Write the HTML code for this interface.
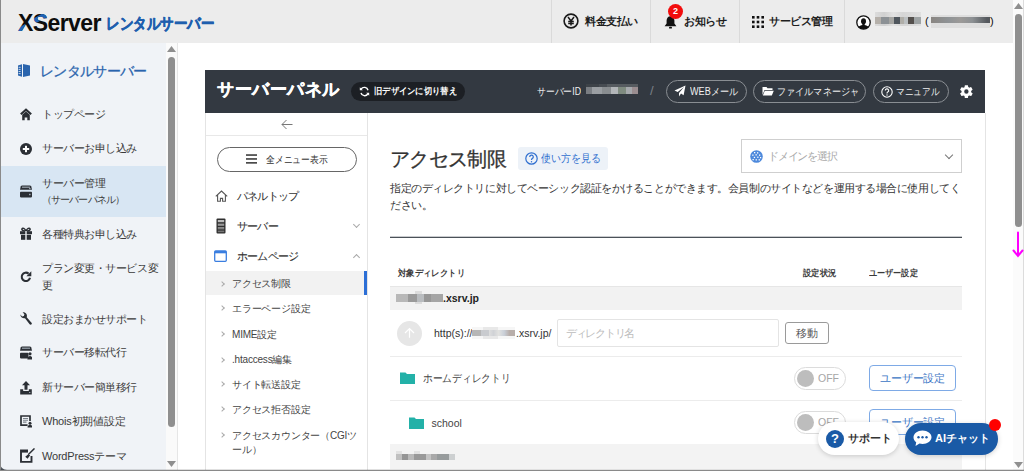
<!DOCTYPE html>
<html lang="ja">
<head>
<meta charset="utf-8">
<style>
*{box-sizing:border-box;margin:0;padding:0}
html,body{width:1024px;height:471px;overflow:hidden;background:#fff}
body{font-family:"Liberation Sans",sans-serif;color:#333;position:relative}
.a{position:absolute;white-space:nowrap}
.t{line-height:20px;height:20px}
#hdr{position:absolute;left:0;top:0;width:1013px;height:43px;background:#ececec}
.vd{position:absolute;top:0;width:1px;height:43px;background:#dadada}
.hi{font-size:11px;font-weight:bold;color:#1e1e1e;letter-spacing:-0.4px}
#side{position:absolute;left:0;top:43px;width:166px;height:427px;background:#f0f3f7;border-bottom-left-radius:7px}
.si{font-size:11px;color:#3a3a3a;letter-spacing:-0.45px}
.sbar{position:absolute;background:#8f8f8f;border-radius:4px}
#ph{position:absolute;left:205px;top:70px;width:780px;height:43px;background:#333941}
.pill{position:absolute;border:1px solid #8a8e93;border-radius:12px;height:23px;top:80px}
.pt{font-size:10px;color:#f0f0f0;letter-spacing:0;transform:scaleX(0.91);transform-origin:0 0}
.nv{font-size:11px;color:#333;letter-spacing:-0.8px;-webkit-text-stroke:0.1px #333}
.sub{font-size:10px;color:#444;letter-spacing:-0.2px}
.chev{position:absolute;width:5px;height:5px;border-right:1px solid #aaa;border-top:1px solid #aaa;transform:rotate(45deg)}
.ic{position:absolute}
</style>
</head>
<body>
<!-- window left border -->
<div class="a" style="left:0;top:0;width:1px;height:471px;background:#8a8a8a;z-index:5"></div>

<!-- HEADER -->
<div id="hdr">
  <div class="a" style="left:18px;top:11px;font-size:23px;font-weight:bold;color:#0d0d0d;letter-spacing:-0.6px;line-height:24px">XServer</div>
  <div class="a" style="left:18px;top:11px;font-size:23px;font-weight:bold;color:#1f63b6;letter-spacing:-0.6px;line-height:24px;clip-path:polygon(-3px 19px,7px 13px,9px 17px,-1px 24px);">X</div>
  <div class="a" style="left:18px;top:11px;font-size:23px;font-weight:bold;color:#1f63b6;letter-spacing:-0.6px;line-height:24px;clip-path:polygon(14.5px 8px,28px 0.5px,30px 5.5px,16.5px 13px);">XServer</div>
  <div class="a" style="left:106px;top:12px;font-size:16px;font-weight:bold;color:#1f5fae;line-height:24px;letter-spacing:0;-webkit-text-stroke:0.55px #1f5fae;transform:scaleX(0.845);transform-origin:0 0">レンタルサーバー</div>

  <div class="vd" style="left:551px"></div>
  <div class="vd" style="left:650px"></div>
  <div class="vd" style="left:739px"></div>
  <div class="vd" style="left:844px"></div>
  <!-- yen -->
  <svg class="ic" style="left:563px;top:13px" width="16" height="16" viewBox="0 0 16 16"><circle cx="8" cy="8" r="6.9" fill="none" stroke="#1a1a1a" stroke-width="1.6"/><path d="M5 4l3 4 3-4M8 8v4.5M5.2 8.6h5.6M5.2 10.4h5.6" stroke="#1a1a1a" stroke-width="1.5" fill="none"/></svg>
  <div class="a hi t" style="left:585px;top:11px">料金支払い</div>
  <!-- bell -->
  <svg class="ic" style="left:664px;top:15px" width="13" height="14" viewBox="0 0 13 14"><path d="M6.5 1.2c-2.4 0-3.9 1.9-3.9 4.4v3L0.6 11.2h11.8L10.4 8.6v-3c0-2.5-1.5-4.4-3.9-4.4z" fill="#111"/><rect x="5" y="11.8" width="3" height="1.8" rx="0.9" fill="#111"/></svg>
  <div class="a" style="left:668px;top:4px;width:15px;height:15px;border-radius:50%;background:#f20d0d;color:#fff;font-size:9px;font-weight:bold;text-align:center;line-height:15px">2</div>
  <div class="a hi t" style="left:684px;top:11px">お知らせ</div>
  <!-- grid -->
  <svg class="ic" style="left:752px;top:16px" width="12" height="12" viewBox="0 0 12 12" fill="#111"><rect x="0" y="0" width="2.6" height="2.6"/><rect x="4.7" y="0" width="2.6" height="2.6"/><rect x="9.4" y="0" width="2.6" height="2.6"/><rect x="0" y="4.7" width="2.6" height="2.6"/><rect x="4.7" y="4.7" width="2.6" height="2.6"/><rect x="9.4" y="4.7" width="2.6" height="2.6"/><rect x="0" y="9.4" width="2.6" height="2.6"/><rect x="4.7" y="9.4" width="2.6" height="2.6"/><rect x="9.4" y="9.4" width="2.6" height="2.6"/></svg>
  <div class="a hi t" style="left:769px;top:11px">サービス管理</div>
  <!-- user -->
  <svg class="ic" style="left:856px;top:14.5px" width="15" height="15" viewBox="0 0 15 15"><defs><clipPath id="uc"><circle cx="7.5" cy="7.5" r="6.6"/></clipPath></defs><circle cx="7.5" cy="7.5" r="6.6" fill="#fff"/><g clip-path="url(#uc)" fill="#111"><ellipse cx="7.5" cy="6.2" rx="2.5" ry="2.9"/><rect x="6.3" y="8" width="2.4" height="3"/><ellipse cx="7.5" cy="14.3" rx="6" ry="4.2"/></g><circle cx="7.5" cy="7.5" r="6.7" fill="none" stroke="#111" stroke-width="1.3"/></svg>
  <div class="a" style="left:875px;top:12px;width:46px;height:14px;background:linear-gradient(90deg,#dcdcdc,#d0d0d0 20%,#e2e2e2 40%,#d6d6d6 60%,#dadada 80%,#e0e0e0)"></div>
  <div class="a" style="left:875px;top:17px;width:46px;height:7px;background:linear-gradient(90deg,#b5b0aa 0,#b5b0aa 12%,#8c9195 12%,#8c9195 30%,#a5a5a2 30%,#a5a5a2 42%,#4f565d 42%,#4f565d 55%,#b0aea8 55%,#b0aea8 62%,#bcc0c2 62%,#bcc0c2 72%,#54504d 72%,#54504d 84%,#9ea3a4 84%)"></div>
  <div class="a" style="left:925px;top:11px;font-size:11px;color:#111;line-height:20px">(</div>
  <div class="a" style="left:931px;top:15px;width:59px;height:13px;background:#dedede"></div>
  <div class="a" style="left:931px;top:17px;width:59px;height:6px;background:linear-gradient(90deg,#8a8682,#8f9396 30%,#9c9a98 50%,#8d9194 70%,#55595e 95%)"></div>
  <div class="a" style="left:990px;top:11px;font-size:11px;color:#111;line-height:20px">)</div>
</div>

<!-- PAGE SCROLLBAR -->
<div class="a" style="left:1013px;top:0;width:11px;height:471px;background:#fbfbfb"></div>
<svg class="ic" style="left:1014px;top:462px" width="9" height="6" viewBox="0 0 9 6"><path d="M0 0H9L4.5 6z" fill="#8f8f8f"/></svg>
<div class="a" style="left:1023px;top:0;width:1px;height:471px;background:#dcdcdc"></div>
<svg class="ic" style="left:1014px;top:3px" width="9" height="6" viewBox="0 0 9 6"><path d="M4.5 0L9 6H0z" fill="#8f8f8f"/></svg>
<div class="sbar" style="left:1015px;top:14px;width:7px;height:213px"></div>

<!-- SIDEBAR -->
<div class="a" style="left:0;top:462px;width:8px;height:9px;background:#50565e"></div>
<div id="side">
  <div class="a" style="left:0;top:123px;width:166px;height:51px;background:#d8e6f3"></div>
</div>
<div class="a" style="left:166px;top:43px;width:11px;height:428px;background:#fafafa"></div>
<div class="a" style="left:177px;top:43px;width:1px;height:428px;background:#e6e6e6"></div>
<svg class="ic" style="left:167px;top:46px" width="9" height="6" viewBox="0 0 9 6"><path d="M4.5 0L9 6H0z" fill="#8f8f8f"/></svg>
<svg class="ic" style="left:167px;top:461px" width="9" height="6" viewBox="0 0 9 6"><path d="M0 0H9L4.5 6z" fill="#8f8f8f"/></svg>
<div class="sbar" style="left:168px;top:57px;width:7px;height:370px"></div>

<!-- sidebar content -->
<svg class="ic" style="left:17px;top:63px" width="14" height="15" viewBox="0 0 14 15"><path d="M1 2.6L5 1.2V13.8L1 12.4z" fill="#2a64ad"/><path d="M6 1L13 2.5V12.5L6 14z" fill="#2a64ad"/><path d="M1.6 4.3h2M1.6 6.4h2M1.6 8.5h2M1.6 10.6h2" stroke="#f0f3f7" stroke-width="0.8"/></svg>
<div class="a" style="left:40px;top:60px;font-size:14px;color:#2a64ad;line-height:22px;letter-spacing:-0.65px;-webkit-text-stroke:0.25px #2a64ad">レンタルサーバー</div>

<div class="a si t" style="left:42px;top:103.5px">トップページ</div>
<div class="a si t" style="left:42px;top:137.5px">サーバーお申し込み</div>
<div class="a si t" style="left:42px;top:172.5px">サーバー管理</div>
<div class="a si t" style="left:42px;top:190px;font-size:9.5px;letter-spacing:-0.9px">（サーバーパネル）</div>
<div class="a si t" style="left:42px;top:223.5px">各種特典お申し込み</div>
<div class="a si t" style="left:42px;top:257.5px">プラン変更・サービス変</div>
<div class="a si t" style="left:42px;top:274.5px">更</div>
<div class="a si t" style="left:42px;top:308.5px">設定おまかせサポート</div>
<div class="a si t" style="left:42px;top:341.5px">サーバー移転代行</div>
<div class="a si t" style="left:42px;top:376.5px">新サーバー簡単移行</div>
<div class="a si t" style="left:42px;top:410.5px;letter-spacing:-0.2px">Whois初期値設定</div>
<div class="a si t" style="left:42px;top:445.5px;letter-spacing:-0.2px">WordPressテーマ</div>

<!-- sidebar icons -->
<svg class="ic" style="left:20px;top:108px" width="12" height="13" viewBox="0 0 12 13"><path d="M0.8 6.2L6 1.6l5.2 4.6" stroke="#2b2f35" stroke-width="2.1" fill="none"/><path d="M2.2 6.8L6 3.6l3.8 3.2V12.3H7.3V9.6H4.7V12.3H2.2z" fill="#2b2f35"/></svg>
<svg class="ic" style="left:20px;top:143px" width="12" height="12" viewBox="0 0 12 12"><circle cx="6" cy="6" r="6" fill="#2b2f35"/><rect x="5" y="2.8" width="2" height="6.4" fill="#fff"/><rect x="2.8" y="5" width="6.4" height="2" fill="#fff"/></svg>
<svg class="ic" style="left:20px;top:185px" width="12" height="13" viewBox="0 0 12 13"><path d="M2.3 0.5h7.4c0.8 0 1.3 0.4 1.6 1.1L12 4.8H0L0.7 1.6C1 0.9 1.5 0.5 2.3 0.5z" fill="#2b2f35"/><rect x="0" y="5.6" width="12" height="0.7" fill="#2b2f35" opacity="0"/><rect x="2" y="1.6" width="8" height="1.2" fill="#9aa3ad"/><rect x="0" y="6.8" width="12" height="5.6" rx="0.8" fill="#2b2f35"/><rect x="9" y="8.8" width="1.6" height="1.4" fill="#9aa3ad"/><rect x="9" y="3" width="1.6" height="1.2" fill="#9aa3ad"/></svg>
<svg class="ic" style="left:20px;top:227px" width="12" height="13" viewBox="0 0 12 13"><path d="M6 4.2C4.8 1.2 2.6 0.6 2 1.8c-0.6 1.2 1 2.2 4 2.4zM6 4.2c1.2-3 3.4-3.6 4-2.4 0.6 1.2-1 2.2-4 2.4z" stroke="#2b2f35" stroke-width="1.5" fill="none"/><rect x="0" y="4.2" width="12" height="3" fill="#2b2f35"/><rect x="1" y="7.8" width="10" height="5" fill="#2b2f35"/><rect x="5.3" y="4" width="1.4" height="9" fill="#f0f3f7"/></svg>
<svg class="ic" style="left:20px;top:271px" width="12" height="12" viewBox="0 0 12 12"><path d="M10 6.8A4.2 4.2 0 1 1 8.6 2.6" stroke="#2b2f35" stroke-width="2.1" fill="none"/><path d="M11.3 0.3V5.2H6.4z" fill="#2b2f35"/></svg>
<svg class="ic" style="left:20px;top:312px" width="12" height="13" viewBox="0 0 12 13"><path d="M0.5 2.6a3.6 3.6 0 0 0 4.7 3.5M6.4 4.9A3.6 3.6 0 0 0 2.8 0.4" stroke="none" fill="none"/><path d="M0.4 2.5A3.7 3.7 0 0 0 5 6.2L9.6 12.2c0.6 0.8 2 0.6 2.2-0.4 0.1-0.4 0-0.8-0.3-1.1L6.7 5.2A3.7 3.7 0 0 0 2.6 0.3L4.4 2.3 3.9 4.1 2.1 4.5z" fill="#2b2f35"/></svg>
<svg class="ic" style="left:20px;top:346px" width="12" height="14" viewBox="0 0 12 14"><path d="M2.3 0.5h7.4c0.8 0 1.3 0.4 1.6 1.1L12 4.8H0L0.7 1.6C1 0.9 1.5 0.5 2.3 0.5z" fill="#2b2f35"/><rect x="2" y="1.6" width="8" height="1.2" fill="#9aa3ad"/><rect x="0" y="6.8" width="8.5" height="5.6" rx="0.8" fill="#2b2f35"/><circle cx="10" cy="7.8" r="1.6" fill="#2b2f35"/><path d="M7.4 13.5c0-2.2 1.2-3.4 2.6-3.4s2.6 1.2 2.6 3.4z" fill="#2b2f35"/></svg>
<svg class="ic" style="left:20px;top:381px" width="12" height="14" viewBox="0 0 12 14"><path d="M6 0L10 4.2H7.5v4.5h-3V4.2H2z" fill="#2b2f35"/><path d="M0.2 8.2h3v1.8h5.6V8.2h3V13.4H0.2z" fill="#2b2f35"/><rect x="9" y="11" width="1.4" height="1" fill="#9aa3ad"/></svg>
<svg class="ic" style="left:20px;top:415px" width="12" height="13" viewBox="0 0 12 13"><path d="M7.6 10.2H1V1h9v5" fill="none" stroke="#2b2f35" stroke-width="1.7"/><path d="M3 3.5h5M3 5.3h5M3 7.1h3.5" stroke="#7b828a" stroke-width="1.1"/><circle cx="10" cy="8.3" r="1.5" fill="#2b2f35"/><path d="M7.5 12.6c0-2 1.1-2.8 2.5-2.8s2.5 0.8 2.5 2.8z" fill="#2b2f35"/></svg>
<svg class="ic" style="left:20px;top:448px" width="15" height="15" viewBox="0 0 15 15"><path d="M8 2.4H1v11.5h10.5V8" fill="none" stroke="#2b2f35" stroke-width="1.9"/><rect x="1" y="2.4" width="7" height="2.2" fill="#2b2f35"/><path d="M14.5 0.4L8.4 6.5M9.2 7.4l-1.7 2.4 -1.2-1.1 2.3-1.8z" stroke="#2b2f35" stroke-width="1.4" fill="#2b2f35"/></svg>

<!-- PANEL -->
<div class="a" style="left:205px;top:113px;width:1px;height:358px;background:#e4e4e4"></div>
<div class="a" style="left:985px;top:113px;width:1px;height:358px;background:#e4e4e4"></div>
<div class="a" style="left:367px;top:113px;width:1px;height:358px;background:#e4e4e4"></div>
<div id="ph"></div>
<div class="a" style="left:217px;top:79px;font-size:17px;font-weight:bold;color:#fff;line-height:22px;letter-spacing:0.5px;-webkit-text-stroke:0.4px #fff">サーバーパネル</div>
<div class="a" style="left:351px;top:82px;width:114px;height:19px;border-radius:10px;background:#1c1f24"></div>
<svg class="ic" style="left:359px;top:86px" width="11" height="11" viewBox="0 0 11 11"><path d="M9 4.2A3.8 3.8 0 0 0 2.2 3" stroke="#fff" stroke-width="1.4" fill="none"/><path d="M2 7a3.8 3.8 0 0 0 6.8 1" stroke="#fff" stroke-width="1.4" fill="none"/><path d="M0.8 1.2v3h3z" fill="#fff"/><path d="M10.2 9.8v-3h-3z" fill="#fff"/></svg>
<div class="a" style="left:374px;top:82px;font-size:9px;font-weight:bold;color:#fff;line-height:19px;letter-spacing:0;transform:scaleX(0.92);transform-origin:0 0">旧デザインに切り替え</div>

<div class="a pt" style="left:537px;top:82px;line-height:19px;font-size:10px;transform:scaleX(0.88)">サーバーID</div>
<div class="a" style="left:586px;top:84px;width:52px;height:10px;background:linear-gradient(90deg,#3d4248 0,#3d4248 25%,#474c52 25%,#474c52 40%,#565b60 40%,#565b60 100%)"></div>
<div class="a" style="left:586px;top:87px;width:52px;height:7px;background:linear-gradient(90deg,#7a7e83 0,#7a7e83 12%,#9a9ea2 12%,#9a9ea2 30%,#898d90 30%,#898d90 48%,#b3b6b9 48%,#b3b6b9 62%,#7f8b80 62%,#7f8b80 76%,#a6a9ad 76%,#a6a9ad 88%,#9a8d90 88%)"></div>
<div class="a" style="left:650px;top:81px;font-size:13px;color:#7c8086;line-height:20px">/</div>

<div class="pill" style="left:666px;width:81px"></div>
<svg class="ic" style="left:674px;top:85px" width="12" height="12" viewBox="0 0 12 12"><path d="M11.5 0.5L0.5 5.6l3.2 1.3L10 2 5 8v3.5L7 8.6l2.6 1.6z" fill="#fff"/></svg>
<div class="a pt" style="left:690px;top:81px;line-height:21px">WEBメール</div>

<div class="pill" style="left:753px;width:113px"></div>
<svg class="ic" style="left:762px;top:86px" width="12" height="10" viewBox="0 0 12 10"><path d="M0.5 1h4l1 1.2h5v1.8H2.5L0.5 9z" fill="#fff"/><path d="M2.8 4.8h9l-2 4.7H0.8z" fill="#fff"/></svg>
<div class="a pt" style="left:777px;top:81px;line-height:21px">ファイルマネージャ</div>

<div class="pill" style="left:873px;width:76px"></div>
<svg class="ic" style="left:881px;top:86px" width="12" height="12" viewBox="0 0 12 12"><circle cx="6" cy="6" r="5.2" fill="none" stroke="#fff" stroke-width="1.1"/><path d="M4.3 4.6a1.7 1.7 0 1 1 2.4 1.5c-0.6 0.3-0.7 0.6-0.7 1.3" stroke="#fff" stroke-width="1.1" fill="none"/><circle cx="6" cy="9" r="0.7" fill="#fff"/></svg>
<div class="a pt" style="left:896px;top:81px;line-height:21px;transform:scaleX(0.865)">マニュアル</div>

<svg class="ic" style="left:959px;top:84px" width="15" height="15" viewBox="0 0 24 24"><path fill="#fff" d="M19.4 13c.04-.32.06-.66.06-1s-.02-.68-.07-1l2.16-1.68a.5.5 0 0 0 .12-.64l-2.05-3.55a.5.5 0 0 0-.61-.22l-2.55 1.03a7.5 7.5 0 0 0-1.73-1L14.35 2.2A.5.5 0 0 0 13.85 2h-4.1a.5.5 0 0 0-.5.42l-.38 2.72c-.62.26-1.2.6-1.730 1L4.6 5.1a.5.5 0 0 0-.6.22L1.930 8.87a.5.5 0 0 0 .12.64L4.2 11.2c-.05.32-.08.66-.08 1s.03.68.08 1l-2.16 1.68a.5.5 0 0 0-.12.64l2.05 3.55c.13.22.38.3.61.22l2.55-1.03c.53.4 1.1.74 1.73 1l.38 2.72c.05.24.26.42.5.42h4.1c.25 0 .46-.18.5-.42l.38-2.72c.62-.26 1.2-.6 1.73-1l2.55 1.03c.23.08.48 0 .61-.22l2.05-3.55a.5.5 0 0 0-.12-.64zM11.8 15.5a3.5 3.5 0 1 1 0-7 3.5 3.5 0 0 1 0 7z"/></svg>

<!-- panel left nav -->
<svg class="ic" style="left:281px;top:119px" width="12" height="11" viewBox="0 0 12 11"><path d="M11.5 5.5H1M5.5 1L1 5.5 5.5 10" stroke="#777" stroke-width="1" fill="none"/></svg>
<div class="a" style="left:206px;top:135px;width:161px;height:1px;background:#e8e8e8"></div>
<div class="a" style="left:217px;top:147px;width:140px;height:25px;border:1px solid #666;border-radius:13px"></div>
<svg class="ic" style="left:246px;top:154px" width="11" height="10" viewBox="0 0 11 10"><rect y="0.2" width="11" height="1.7" fill="#4a4a4a"/><rect y="4.1" width="11" height="1.7" fill="#4a4a4a"/><rect y="8" width="11" height="1.7" fill="#4a4a4a"/></svg>
<div class="a" style="left:266px;top:149px;font-size:10px;color:#333;line-height:21px;letter-spacing:0;transform:scaleX(0.88);transform-origin:0 0">全メニュー表示</div>

<svg class="ic" style="left:215px;top:190px" width="13" height="12" viewBox="0 0 13 12"><path d="M0.8 6.4L6.5 1l5.7 5.4M2.6 5v6.3h2.8V8.4h2.2v2.9h2.8V5" stroke="#555" stroke-width="1.1" fill="none"/></svg>
<div class="a nv t" style="left:237px;top:186px">パネルトップ</div>
<svg class="ic" style="left:216px;top:218px" width="10" height="16" viewBox="0 0 10 16"><defs><linearGradient id="sg" x1="0" y1="0" x2="0" y2="1"><stop offset="0" stop-color="#aaa"/><stop offset="1" stop-color="#555"/></linearGradient></defs><rect x="0.5" y="0.5" width="9" height="15" rx="1" fill="#2f2f2f"/><rect x="1.8" y="2" width="6.4" height="2.2" fill="#bdbdbd"/><rect x="1.8" y="5.6" width="6.4" height="2.2" fill="#9a9a9a"/><rect x="1.8" y="9.2" width="6.4" height="2.5" fill="url(#sg)"/><rect x="1.8" y="12.6" width="6.4" height="1.6" fill="#777"/></svg>
<div class="a nv t" style="left:237px;top:216px">サーバー</div>
<div class="chev" style="left:354px;top:222px;transform:rotate(135deg);border-color:#aaa"></div>
<svg class="ic" style="left:214px;top:250px" width="13" height="12" viewBox="0 0 13 12"><rect x="0.7" y="0.9" width="11.6" height="10.4" rx="1" fill="none" stroke="#3a7ee0" stroke-width="1.3"/><rect x="0.7" y="1" width="11.6" height="2.3" fill="#3a7ee0"/></svg>
<div class="a nv t" style="left:237px;top:246px">ホームページ</div>
<div class="chev" style="left:354px;top:255px;transform:rotate(-45deg);border-color:#aaa"></div>

<div class="a" style="left:206px;top:271px;width:161px;height:24px;background:#f2f2f2"></div>
<div class="a" style="left:364px;top:271px;width:3px;height:24px;background:#2c6fd6"></div>
<div class="chev" style="left:220px;top:282px;width:4px;height:4px"></div>
<div class="a sub t" style="left:232px;top:274px">アクセス制限</div>
<div class="chev" style="left:220px;top:306px;width:4px;height:4px"></div>
<div class="a sub t" style="left:232px;top:298.5px">エラーページ設定</div>
<div class="chev" style="left:220px;top:332px;width:4px;height:4px"></div>
<div class="a sub t" style="left:232px;top:324.5px">MIME設定</div>
<div class="chev" style="left:220px;top:358px;width:4px;height:4px"></div>
<div class="a sub t" style="left:232px;top:350px">.htaccess編集</div>
<div class="chev" style="left:220px;top:382px;width:4px;height:4px"></div>
<div class="a sub t" style="left:232px;top:374.5px">サイト転送設定</div>
<div class="chev" style="left:220px;top:407px;width:4px;height:4px"></div>
<div class="a sub t" style="left:232px;top:399.5px">アクセス拒否設定</div>
<div class="chev" style="left:220px;top:433px;width:4px;height:4px"></div>
<div class="a sub t" style="left:232px;top:425.5px">アクセスカウンター（CGIツ</div>
<div class="a sub t" style="left:232px;top:439.5px">ール）</div>

<!-- CONTENT -->
<div class="a" style="left:390px;top:146px;font-size:20px;color:#333;line-height:26px;letter-spacing:-0.64px;-webkit-text-stroke:0.3px #333">アクセス制限</div>
<div class="a" style="left:518px;top:147px;width:90px;height:23px;border-radius:3px;background:#edf2f8"></div>
<svg class="ic" style="left:525px;top:152px" width="13" height="13" viewBox="0 0 13 13"><circle cx="6.5" cy="6.5" r="5.7" fill="none" stroke="#2f6fcf" stroke-width="1.2"/><path d="M4.7 5a1.8 1.8 0 1 1 2.5 1.6c-0.6 0.3-0.7 0.6-0.7 1.4" stroke="#2f6fcf" stroke-width="1.2" fill="none"/><circle cx="6.5" cy="9.8" r="0.75" fill="#2f6fcf"/></svg>
<div class="a" style="left:541px;top:148px;font-size:10.5px;color:#2f6fcf;line-height:21px;letter-spacing:0;transform:scaleX(0.9);transform-origin:0 0">使い方を見る</div>

<div class="a" style="left:741px;top:139px;width:221px;height:34px;border:1px solid #cfcfcf"></div>
<svg class="ic" style="left:750px;top:150px" width="13" height="13" viewBox="0 0 13 13"><circle cx="6.5" cy="6.5" r="6.3" fill="#4d89dc"/><g fill="#fff"><rect x="4" y="2" width="1.3" height="1.3"/><rect x="7" y="2.2" width="1.3" height="1.3"/><rect x="2.2" y="4.5" width="1.3" height="1.3"/><rect x="5.5" y="4.2" width="1.3" height="1.3"/><rect x="9" y="4.5" width="1.3" height="1.3"/><rect x="3.8" y="6.8" width="1.3" height="1.3"/><rect x="7.2" y="6.6" width="1.3" height="1.3"/><rect x="10" y="7" width="1.2" height="1.3"/><rect x="2.5" y="9" width="1.3" height="1.3"/><rect x="5.6" y="9.2" width="1.3" height="1.3"/><rect x="8.6" y="9.2" width="1.3" height="1.3"/></g></svg>
<div class="a" style="left:768px;top:146px;font-size:11px;color:#aaa;line-height:20px;letter-spacing:-1.2px">ドメインを選択</div>
<div class="chev" style="left:946px;top:152px;width:6px;height:6px;border-color:#777;transform:rotate(135deg)"></div>

<div class="a" style="left:390px;top:180px;font-size:11px;color:#333;line-height:17px;letter-spacing:-0.44px">指定のディレクトリに対してベーシック認証をかけることができます。会員制のサイトなどを運用する場合に使用してく</div>
<div class="a" style="left:390px;top:197px;font-size:11px;color:#333;line-height:17px;letter-spacing:-0.44px">ださい。</div>

<div class="a" style="left:390px;top:236px;width:572px;height:1px;background:#c9cbce"></div><div class="a" style="left:390px;top:237px;width:572px;height:1px;background:#4b5158"></div>

<div class="a" style="left:397.5px;top:264px;font-size:8.5px;font-weight:bold;color:#3a3a3a;line-height:18px;letter-spacing:0;transform:scaleX(0.93);transform-origin:0 0">対象ディレクトリ</div>
<div class="a" style="left:803px;top:264px;font-size:8.5px;font-weight:bold;color:#3a3a3a;line-height:18px;letter-spacing:0;transform:scaleX(0.92);transform-origin:0 0">設定状況</div>
<div class="a" style="left:869px;top:264px;font-size:8.5px;font-weight:bold;color:#3a3a3a;line-height:18px;letter-spacing:0;transform:scaleX(0.9);transform-origin:0 0">ユーザー設定</div>
<div class="a" style="left:390px;top:286px;width:572px;height:24px;background:#f2f2f2;border-top:1px solid #e6e6e6"></div>
<div class="a" style="left:396px;top:291px;width:47px;height:13px;background:linear-gradient(90deg,#f2f2f2 0,#f2f2f2 40%,#dcdcdc 40%,#dcdcdc 55%,#f2f2f2 55%)"></div>
<div class="a" style="left:396px;top:294px;width:47px;height:8px;background:linear-gradient(90deg,#b8b8b8 0,#b8b8b8 25%,#9a9a9a 25%,#9a9a9a 45%,#b9bcbf 45%,#b9bcbf 60%,#979797 60%,#979797 75%,#a5a5a5 75%)"></div>
<div class="a" style="left:443px;top:288px;font-size:10.5px;font-weight:bold;color:#222;line-height:20px">.xsrv.jp</div>

<div class="a" style="left:397px;top:321px;width:25px;height:25px;border-radius:50%;background:#e6e6e6"></div>
<svg class="ic" style="left:404px;top:327px" width="11" height="13" viewBox="0 0 11 13"><path d="M5.5 10.8V1.5M1 6L5.5 1.5 10 6" stroke="#fff" stroke-width="1.2" fill="none"/></svg>
<div class="a" style="left:434px;top:323px;font-size:10.5px;color:#333;line-height:20px">http(s)://</div>
<div class="a" style="left:472px;top:327px;width:43px;height:12px;background:linear-gradient(90deg,#f6f6f6 0,#f6f6f6 25%,#e8e8e8 25%,#e8e8e8 60%,#f6f6f6 60%)"></div>
<div class="a" style="left:472px;top:330px;width:43px;height:6px;background:linear-gradient(90deg,#b6b6b6 0,#b6b6b6 20%,#c9cbcf 20%,#c9cbcf 40%,#dedede 40%,#d0d2d6 50%,#e2e2e0 62%,#c9cfd8 75%,#b8aeaa 87%)"></div>
<div class="a" style="left:516px;top:323px;font-size:10.5px;color:#333;line-height:20px">.xsrv.jp/</div>
<div class="a" style="left:557px;top:319px;width:222px;height:28px;border:1px solid #e4e4e4;border-radius:2px"></div>
<div class="a" style="left:566px;top:323px;font-size:10.5px;color:#bcbcbc;line-height:20px;letter-spacing:-1.3px">ディレクトリ名</div>
<div class="a" style="left:785px;top:322px;width:44px;height:22px;border:1px solid #9a9a9a;border-radius:3px;font-size:10.5px;color:#555;line-height:20px;text-align:center">移動</div>
<div class="a" style="left:390px;top:356px;width:572px;height:1px;background:#ececec"></div>

<svg class="ic" style="left:400px;top:372px" width="15" height="12" viewBox="0 0 15 12"><path d="M0 0.5h5.5l1.5 1.5H15V12H0z" fill="#23b1a8"/></svg>
<div class="a" style="left:423px;top:368px;font-size:11px;color:#444;line-height:20px;transform:scaleX(0.885);transform-origin:0 0">ホームディレクトリ</div>
<div class="a" style="left:794px;top:367px;width:52px;height:23px;border:1px solid #dcdcdc;border-radius:12px;background:#fff"></div>
<div class="a" style="left:797px;top:370px;width:17px;height:17px;border-radius:50%;background:#bdbdbd"></div>
<div class="a" style="left:818px;top:368px;font-size:10.5px;color:#a6a6a6;line-height:20px">OFF</div>
<div class="a" style="left:869px;top:365px;width:87px;height:26px;border:1px solid #7eaae6;border-radius:4px;font-size:11px;color:#3a74c4;line-height:24px;text-align:center;letter-spacing:-0.25px">ユーザー設定</div>
<div class="a" style="left:390px;top:400px;width:572px;height:1px;background:#ececec"></div>

<svg class="ic" style="left:409px;top:417px" width="15" height="12" viewBox="0 0 15 12"><path d="M0 0.5h5.5l1.5 1.5H15V12H0z" fill="#23b1a8"/></svg>
<div class="a" style="left:431.5px;top:413px;font-size:10.5px;color:#444;line-height:20px">school</div>
<div class="a" style="left:794px;top:411px;width:52px;height:23px;border:1px solid #dcdcdc;border-radius:12px;background:#fff"></div>
<div class="a" style="left:797px;top:414px;width:17px;height:17px;border-radius:50%;background:#bdbdbd"></div>
<div class="a" style="left:818px;top:412px;font-size:10.5px;color:#a6a6a6;line-height:20px">OFF</div>
<div class="a" style="left:869px;top:409px;width:87px;height:26px;border:1px solid #7eaae6;border-radius:4px;font-size:11px;color:#3a74c4;line-height:24px;text-align:center;letter-spacing:-0.25px">ユーザー設定</div>

<div class="a" style="left:390px;top:444px;width:572px;height:25px;background:#f3f3f3"></div>
<div class="a" style="left:396px;top:451px;width:6px;height:4px;background:#e2e2e2"></div>
<div class="a" style="left:414px;top:451px;width:6px;height:4px;background:#e2e2e2"></div>
<div class="a" style="left:396px;top:454px;width:59px;height:6px;background:linear-gradient(90deg,#c0c0c0 0,#c0c0c0 10%,#959595 10%,#959595 20%,#b9b9b9 20%,#b9b9b9 30%,#999 30%,#999 50%,#c4c4c4 50%,#c4c4c4 60%,#a9a9a9 60%,#a9a9a9 70%,#979b9c 70%,#979b9c 90%,#cdd0d1 90%)"></div>

<!-- floating buttons -->
<div class="a" style="left:818px;top:422px;width:81px;height:33px;border-radius:17px;background:#fff;box-shadow:0 1px 5px rgba(0,0,0,0.18)"></div>
<div class="a" style="left:826px;top:430px;width:18px;height:18px;border-radius:50%;background:#1a5aa6;color:#fff;font-weight:bold;font-size:13px;line-height:18px;text-align:center">?</div>
<div class="a" style="left:848px;top:428px;font-size:11px;font-weight:bold;color:#333;line-height:20px">サポート</div>
<div class="a" style="left:905px;top:423px;width:93px;height:32px;border-radius:16px;background:#1a5aa6;box-shadow:0 1px 5px rgba(0,0,0,0.18)"></div>
<svg class="ic" style="left:913px;top:430px" width="19" height="17" viewBox="0 0 19 17"><path d="M9.5 0.5C4.5 0.5 0.5 3.5 0.5 7.3c0 2 1 3.7 2.7 4.9L2.5 16l4-2.5c1 0.3 2 0.4 3 0.4 5 0 9-3 9-6.7S14.5 0.5 9.5 0.5z" fill="#fff"/><circle cx="5.5" cy="7.3" r="1.2" fill="#1a5aa6"/><circle cx="9.5" cy="7.3" r="1.2" fill="#1a5aa6"/><circle cx="13.5" cy="7.3" r="1.2" fill="#1a5aa6"/></svg>
<div class="a" style="left:935px;top:428px;font-size:11px;font-weight:bold;color:#fff;line-height:20px">AIチャット</div>
<div class="a" style="left:989px;top:419px;width:12px;height:12px;border-radius:50%;background:#f00"></div>

<!-- magenta arrow -->
<svg class="ic" style="left:1011px;top:230px" width="13" height="28" viewBox="0 0 13 28"><path d="M7 2.5V26M2.5 20.5L7 26 11.5 20.5" stroke="#f0f" stroke-width="2" fill="none" stroke-linecap="round"/></svg>

<!-- bottom window border -->
<div class="a" style="left:0;top:469px;width:1024px;height:1px;background:rgba(0,0,0,0.12);z-index:6"></div><div class="a" style="left:0;top:470px;width:1024px;height:1px;background:#8a8a8a;z-index:6"></div>
</body>
</html>
